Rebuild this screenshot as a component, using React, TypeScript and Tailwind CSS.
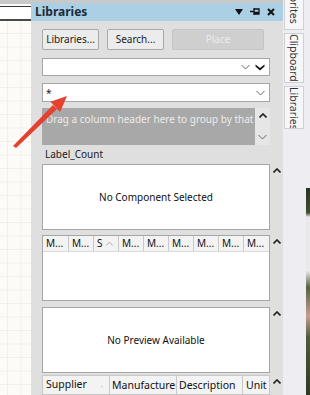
import React from "react";

const font = "font-['Noto_Sans',Arial,sans-serif]";

function Caret({ up = true }: { up?: boolean }) {
  return (
    <svg width="8" height="5" viewBox="0 0 8 5" className="block">
      <polyline
        points={up ? "0.5,4.5 4,1 7.5,4.5" : "0.5,0.5 4,4 7.5,0.5"}
        fill="none"
        stroke="#222"
        strokeWidth="1.6"
      />
    </svg>
  );
}

function Chevron() {
  return (
    <svg width="9" height="6" viewBox="0 0 9 6" className="block">
      <polyline points="0.5,1 4.5,5 8.5,1" fill="none" stroke="#6a6a6a" strokeWidth="1" />
    </svg>
  );
}

function GridCanvas() {
  return (
    <div className="flex h-full w-[31px] shrink-0 flex-col bg-[#fdfbf8]">
      <div className="h-[4px] bg-[#c9c9c9]" />
      <div className="h-[2px]" />
      <div className="h-px bg-[#3a3a3a]" />
      <div className="h-[12px] bg-white" />
      <div className="h-[2px] bg-[#4a4a4a]" />
      <svg width="31" height="380" className="block">
        <defs>
          <pattern id="g" width="13.5" height="13.5" patternUnits="userSpaceOnUse" x="7" y="12">
            <path d="M0 0H13.5M0 0V13.5" stroke="#ece4da" strokeWidth="1" fill="none" />
          </pattern>
        </defs>
        <rect width="31" height="380" fill="url(#g)" />
      </svg>
    </div>
  );
}

function Btn({ label, w, disabled }: { label: string; w: string; disabled?: boolean }) {
  return (
    <div
      className={`flex h-[21px] items-center justify-center rounded-[2px] border text-[10px] ${w} ${
        disabled
          ? "border-[#c4c4c4] bg-[#cfcfcf] text-[#ececec]"
          : "border-[#a9a9a9] bg-[#ececec] text-[#1a1a1a]"
      }`}
    >
      {label}
    </div>
  );
}

function Row({ children, caret, className = "" }: { children: React.ReactNode; caret?: boolean; className?: string }) {
  return (
    <div className={`flex ${className}`}>
      <div className="w-[228px] shrink-0">{children}</div>
      <div className="flex w-[13px] justify-center pt-[4px]">{caret && <Caret />}</div>
    </div>
  );
}

const midCols = ["M...", "M...", "S", "M...", "M...", "M...", "M...", "M...", "M..."];

function LibrariesPanel() {
  return (
    <div className="flex h-full w-[252px] shrink-0 flex-col bg-[#dfdfdf]">
      <div className="h-[3px] bg-[#c9c9c9]" />
      <div className="flex h-[21px] items-center bg-[#abcfe5] pl-[4px] pr-[8px]">
        <span className="text-[12px] font-bold text-[#1d2b3a]">Libraries</span>
        <div className="ml-auto flex items-center gap-[7px]">
          <svg width="8" height="6" viewBox="0 0 8 6">
            <polygon points="0,0 8,0 4,6" fill="#111" />
          </svg>
          <svg width="10" height="9" viewBox="0 0 10 9">
            <path d="M0 4.5H4M4 1V8M4 2H9V7H4M4 5.5H9" stroke="#111" strokeWidth="1.3" fill="none" />
          </svg>
          <svg width="8" height="8" viewBox="0 0 8 8">
            <path d="M1 1L7 7M7 1L1 7" stroke="#111" strokeWidth="2" />
          </svg>
        </div>
      </div>

      <div className="flex flex-col pl-[11px] pt-[8px]">
        <Row>
          <div className="flex gap-[8px]">
            <Btn label="Libraries..." w="w-[57px]" />
            <Btn label="Search..." w="w-[57px]" />
            <Btn label="Place" w="w-[92px]" disabled />
          </div>
        </Row>

        <Row className="mt-[8px]">
          <div className="flex h-[18px] items-center justify-end gap-[5px] border border-[#a6a6a6] bg-white pr-[4px]">
            <Chevron />
            <svg width="10" height="7" viewBox="0 0 10 7">
              <path d="M0.5 0.5L5 4L9.5 0.5V2.5L5 6.5L0.5 2.5Z" fill="#111" />
            </svg>
          </div>
        </Row>

        <Row className="mt-[7px]">
          <div className="flex h-[19px] items-center border border-[#a6a6a6] bg-white pl-[3px] pr-[4px]">
            <span className="text-[10px] leading-none text-[#222]">*</span>
            <div className="ml-auto">
              <Chevron />
            </div>
          </div>
        </Row>

        <Row className="mt-[6px]">
          <div className="flex h-[37px] bg-[#a8a8a8]">
            <div className="flex-1 overflow-hidden whitespace-nowrap pl-[4px] pt-[4px] text-[10px] text-[#ececec]">
              Drag a column header here to group by that
            </div>
            <div className="flex w-[15px] flex-col items-center justify-between bg-[#e6e6e6] py-[5px]">
              <Caret />
              <Chevron />
            </div>
          </div>
        </Row>

        <Row>
          <div className="flex h-[19px] items-center pl-[3px] text-[10px] text-[#1a1a1a]">Label_Count</div>
        </Row>

        <Row caret>
          <div className="flex h-[66px] items-center justify-center border border-[#a6a6a6] bg-white text-[10px] text-[#111]">
            No Component Selected
          </div>
        </Row>

        <Row caret className="mt-[5px]">
          <div className="flex h-[66px] flex-col border border-[#a6a6a6] bg-white">
            <div className="flex h-[16px] border-b border-[#dadada] bg-[#f3f3f3]">
              {midCols.map((c, i) => (
                <div
                  key={i}
                  className={`flex w-[25px] shrink-0 items-center pl-[3px] text-[10px] text-[#111] ${
                    i > 0 ? "border-l border-[#c8c8c8]" : ""
                  }`}
                >
                  {c}
                  {c === "S" && (
                    <svg width="7" height="5" viewBox="0 0 7 5" className="ml-[3px]">
                      <polyline points="0.5,4.5 3.5,1 6.5,4.5" fill="none" stroke="#b0b0b0" strokeWidth="1" />
                    </svg>
                  )}
                </div>
              ))}
            </div>
          </div>
        </Row>

        <Row caret className="mt-[6px]">
          <div className="flex h-[66px] items-center justify-center border border-[#a6a6a6] bg-white text-[10px] text-[#111]">
            No Preview Available
          </div>
        </Row>

        <Row caret className="mt-[2px]">
          <div className="flex h-[20px] border border-[#c8c8c8] bg-[#f3f3f3] text-[10.5px] text-[#111]">
            <div className="flex w-[66px] items-center pl-[3px]">
              Supplier
              <span className="ml-auto pr-[6px] text-[7px] text-[#999]">.</span>
            </div>
            <div className="w-[67px] overflow-hidden whitespace-nowrap border-l border-[#c8c8c8] pl-[2px] pt-[2px]">
              Manufacturer
            </div>
            <div className="w-[66px] border-l border-[#c8c8c8] pl-[2px] pt-[2px]">Description</div>
            <div className="flex-1 border-l border-[#c8c8c8] pl-[3px] pt-[2px]">Unit</div>
          </div>
        </Row>
      </div>
    </div>
  );
}

function Tab({ label, h, className = "" }: { label: string; h: string; className?: string }) {
  return (
    <div
      className={`w-[20px] shrink-0 overflow-hidden border border-[#cfcfd4] bg-[#f7f7f9] text-center text-[10.5px] leading-[18px] whitespace-nowrap text-[#333] [writing-mode:vertical-rl] ${h} ${className}`}
    >
      {label}
    </div>
  );
}

function SideTabs() {
  return (
    <div className="flex h-full flex-1 overflow-hidden bg-[#eeeef2]">
      <div className="flex w-[22px] shrink-0 flex-col gap-[3px] pl-[1px]">
        <Tab label="Favorites" h="h-[58px]" className="-mt-[28px]" />
        <Tab label="Clipboard" h="h-[50px]" />
        <Tab label="Libraries" h="h-[43px]" />
      </div>
      <div className="ml-auto mt-[188px] w-[4px] bg-[linear-gradient(to_bottom,#27331f,#3f5030_12%,#e9e9ec_14%,#e9e9ec_40%,#55633f_48%,#c79d92_62%,#4d5c38_72%,#2e3a22)]" />
    </div>
  );
}

export default function App() {
  return (
    <div className={`relative flex h-[395px] w-[310px] overflow-hidden bg-white ${font}`}>
      <GridCanvas />
      <LibrariesPanel />
      <SideTabs />
      <svg width="80" height="160" viewBox="0 0 80 160" className="pointer-events-none absolute left-0 top-0">
        <polygon points="13,146 16,148 57,109 53,105" fill="#e4412f" />
        <polygon points="67,96 50.5,101.8 60.1,112" fill="#e4412f" />
      </svg>
    </div>
  );
}
